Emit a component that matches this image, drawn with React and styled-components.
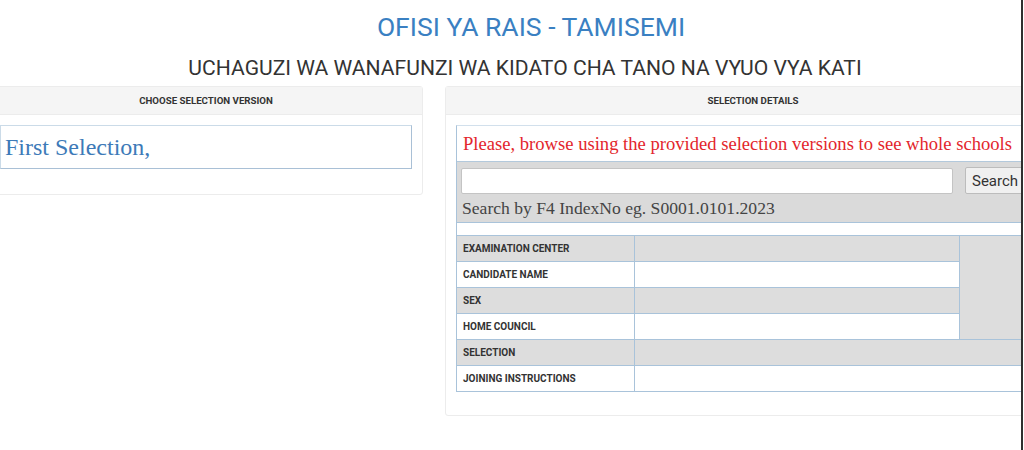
import React from "react";
import styled, { createGlobalStyle } from "styled-components";

const Global = createGlobalStyle`
  html, body { margin: 0; padding: 0; background: #fff; overflow: hidden; }
  * { box-sizing: border-box; }
`;

const Viewport = styled.div`
  width: 1023px;
  height: 450px;
  overflow: hidden;
  border-right: 2px solid #2f2f2f;
`;

const Container = styled.div`
  width: 1072px;
  margin-left: -11px;
  padding-top: 13px;
  font-family: Roboto, "Liberation Sans", sans-serif;
`;

const Title = styled.h1`
  margin: 0;
  padding-left: 12px;
  text-align: center;
  font-size: 26.5px;
  line-height: 28px;
  font-weight: 400;
  color: #3a80c2;
`;

const Subtitle = styled.h2`
  margin: 13px 0 0;
  text-align: center;
  font-size: 21.1px;
  line-height: 28px;
  font-weight: 400;
  color: #333;
`;

const Row = styled.div`
  display: flex;
  gap: 22px;
  align-items: flex-start;
  margin-top: 4px;
`;

const Panel = styled.section`
  width: ${(p) => p.$w}px;
  flex: none;
  border: 1px solid #ececec;
  border-radius: 3px;
  background: #fff;
`;

const PanelHeading = styled.div`
  height: 28px;
  display: flex;
  align-items: center;
  justify-content: center;
  background: #f5f5f5;
  border-bottom: 1px solid #ececec;
  font-size: 9.7px;
  font-weight: 700;
  color: #333;
`;

const PanelBody = styled.div`
  padding: 10px 10px ${(p) => p.$pb}px;
`;

const VersionBox = styled.div`
  height: 44px;
  display: flex;
  align-items: center;
  padding-left: 4px;
  border: 1px solid #cbdbe8;
  border-right-color: #a9c0d6;
  border-bottom-color: #a9c0d6;
  font-family: "Liberation Serif", serif;
  font-size: 24px;
  color: #3d7ab8;
`;

const DetailsBox = styled.div`
  border-left: 1px solid #a9c3da;
  border-top: 1px solid #d2e0ec;
  display: flex;
  flex-direction: column;
`;

const Notice = styled.div`
  height: 35px;
  display: flex;
  align-items: center;
  padding-left: 6px;
  font-family: "Liberation Serif", serif;
  font-size: 18.6px;
  color: #e3262c;
  white-space: nowrap;
`;

const SearchArea = styled.div`
  height: 62px;
  background: #dadada;
  border-top: 1px solid #b3c9dc;
  border-bottom: 1px solid #a9c3da;
  padding: 5px 0 0 4px;
`;

const SearchRow = styled.div`
  display: flex;
  align-items: center;
  gap: 12px;
`;

const SearchInput = styled.input`
  width: 492px;
  height: 26px;
  border: 1px solid #c4c4c4;
  border-radius: 2px;
  background: #fff;
  outline: none;
`;

const SearchButton = styled.button`
  height: 27px;
  padding: 0 6px;
  border: 1px solid #bcbcbc;
  border-radius: 2px;
  background: #f0f0f0;
  font-family: Roboto, "Liberation Sans", sans-serif;
  font-size: 15px;
  color: #333;
`;

const Hint = styled.div`
  margin-top: 1px;
  font-family: "Liberation Serif", serif;
  font-size: 17.6px;
  line-height: 26px;
  color: #444;
  padding-left: 1px;
`;

const Spacer = styled.div`
  height: 12px;
`;

const Table = styled.table`
  border-collapse: collapse;
  width: 596px;
  table-layout: fixed;
`;

const Cell = styled.td`
  height: 26px;
  padding: 0 0 0 6px;
  border: 1px solid #a9c3da;
  background: ${(p) => (p.$shade ? "#dddddd" : "#fff")};
  font-size: 10px;
  font-weight: 700;
  color: #333;
  white-space: nowrap;
  &:first-child { border-left: none; }
`;

const rows = [
  "EXAMINATION CENTER",
  "CANDIDATE NAME",
  "SEX",
  "HOME COUNCIL",
  "SELECTION",
  "JOINING INSTRUCTIONS",
];

export default function App() {
  return (
    <>
      <Global />
      <Viewport>
        <Container>
          <Title>OFISI YA RAIS - TAMISEMI</Title>
          <Subtitle>UCHAGUZI WA WANAFUNZI WA KIDATO CHA TANO NA VYUO VYA KATI</Subtitle>
          <Row>
            <Panel $w={434}>
              <PanelHeading>CHOOSE SELECTION VERSION</PanelHeading>
              <PanelBody $pb={25}>
                <VersionBox>First Selection,</VersionBox>
              </PanelBody>
            </Panel>
            <Panel $w={616}>
              <PanelHeading>SELECTION DETAILS</PanelHeading>
              <PanelBody $pb={23}>
                <DetailsBox>
                  <Notice>Please, browse using the provided selection versions to see whole schools</Notice>
                  <SearchArea>
                    <SearchRow>
                      <SearchInput type="text" />
                      <SearchButton>Search</SearchButton>
                    </SearchRow>
                    <Hint>Search by F4 IndexNo eg. S0001.0101.2023</Hint>
                  </SearchArea>
                  <Spacer />
                  <Table>
                    <colgroup>
                      <col style={{ width: 177 }} />
                      <col style={{ width: 325 }} />
                      <col style={{ width: 94 }} />
                    </colgroup>
                    <tbody>
                      {rows.map((label, i) => {
                        const shade = i % 2 === 0;
                        return (
                          <tr key={label}>
                            <Cell $shade={shade}>{label}</Cell>
                            {i < 4 ? (
                              <Cell $shade={shade} />
                            ) : (
                              <Cell $shade={shade} colSpan={2} />
                            )}
                            {i === 0 && <Cell $shade rowSpan={4} />}
                          </tr>
                        );
                      })}
                    </tbody>
                  </Table>
                </DetailsBox>
              </PanelBody>
            </Panel>
          </Row>
        </Container>
      </Viewport>
    </>
  );
}
